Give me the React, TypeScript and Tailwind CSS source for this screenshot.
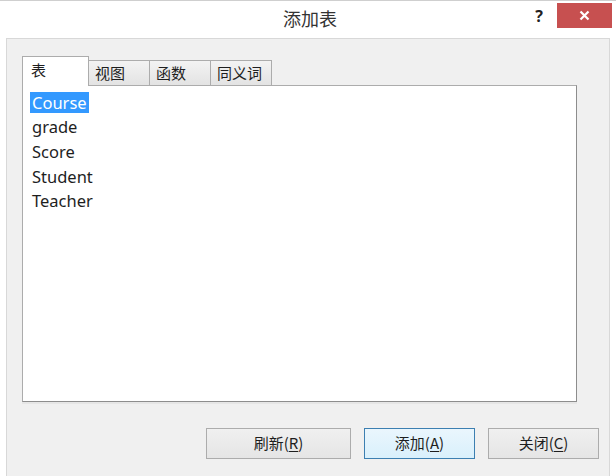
import { useState } from 'react';

const tabs = ['表', '视图', '函数', '同义词'];
const tables = ['Course', 'grade', 'Score', 'Student', 'Teacher'];

const cjk = { fontFamily: '"Noto Sans CJK SC", "Noto Sans", sans-serif' };
const latin = { fontFamily: '"Noto Sans", "Open Sans", "Noto Sans CJK SC", sans-serif' };

// Hotkey label like 刷新(R) with underlined letter
const BtnLabel = ({ text, hot }: { text: string; hot: string }) => (
  <span>
    {text}(<span className="underline underline-offset-2">{hot}</span>)
  </span>
);

export default function App() {
  const [active] = useState(0);
  const [selected, setSelected] = useState(0);

  return (
    <div
      className="w-[616px] h-[476px] bg-white flex flex-col overflow-hidden border-t border-[#cfcfcf] text-[#1e1e1e]"
      style={cjk}
    >
      {/* Title bar */}
      <div className="relative h-[37px] flex items-center justify-center shrink-0">
        <span className="text-[18px] text-[#333] pl-[4px] -mt-[2px]">添加表</span>
        <div className="absolute right-[4px] top-[2px] flex items-start">
          <span className="text-[16px] font-bold text-[#222] mr-[14px] mt-[1px]" style={latin}>
            ?
          </span>
          <div className="w-[55px] h-[25px] bg-[#c75050] flex items-center justify-center">
            <svg width="11" height="11" viewBox="0 0 11 11">
              <path d="M1.5 1.5 L9.5 9.5 M9.5 1.5 L1.5 9.5" stroke="#fff" strokeWidth="2.2" />
            </svg>
          </div>
        </div>
      </div>

      {/* Body */}
      <div className="flex-1 mx-[6px] border border-b-0 border-[#d8d8d8] bg-[#f0f0f0] flex flex-col pl-[15px] pr-[32px] pt-[18px]">
        {/* Tabs */}
        <div className="flex items-end h-[29px] -mb-px relative z-10">
          {tabs.map((t, i) =>
            i === active ? (
              <div
                key={t}
                className="w-[67px] h-[30px] bg-white border border-b-0 border-[#acacac] text-[15px] pl-[8px] pt-[1px] leading-[24px]"
              >
                {t}
              </div>
            ) : (
              <div
                key={t}
                className="w-[62px] h-[26px] bg-gradient-to-b from-[#f3f3f3] to-[#e3e3e3] border border-[#acacac] -ml-px first:ml-0 text-[15px] pl-[6px] leading-[24px]"
              >
                {t}
              </div>
            )
          )}
        </div>

        {/* List box */}
        <div className="h-[317px] bg-white border border-[#acacac] border-r-[#8d8d8d] border-b-[#8d8d8d] shadow-[0_2px_0_#e6e6e6] pt-[4px] pl-[7px]">
          {tables.map((n, i) => (
            <div key={n} className="h-[24.6px] flex items-center">
              <span
                onClick={() => setSelected(i)}
                className={
                  'text-[16.5px] leading-[21px] px-[2px] cursor-default ' +
                  (i === selected ? 'bg-[#3399ff] text-white' : 'text-[#1e1e1e]')
                }
                style={latin}
              >
                {n}
              </span>
            </div>
          ))}
        </div>

        {/* Buttons */}
        <div className="flex justify-end gap-[13px] mt-[26px] -mr-[22px]">
          <button className="w-[145px] h-[31px] border border-[#acacac] bg-gradient-to-b from-[#f0f0f0] to-[#e5e5e5] text-[15px]">
            <BtnLabel text="刷新" hot="R" />
          </button>
          <button className="w-[111px] h-[31px] border border-[#3c7fb1] bg-gradient-to-b from-[#eaf6fd] to-[#d9f0fc] text-[15px]">
            <BtnLabel text="添加" hot="A" />
          </button>
          <button className="w-[111px] h-[31px] border border-[#acacac] bg-gradient-to-b from-[#f0f0f0] to-[#e5e5e5] text-[15px]">
            <BtnLabel text="关闭" hot="C" />
          </button>
        </div>
      </div>
    </div>
  );
}
